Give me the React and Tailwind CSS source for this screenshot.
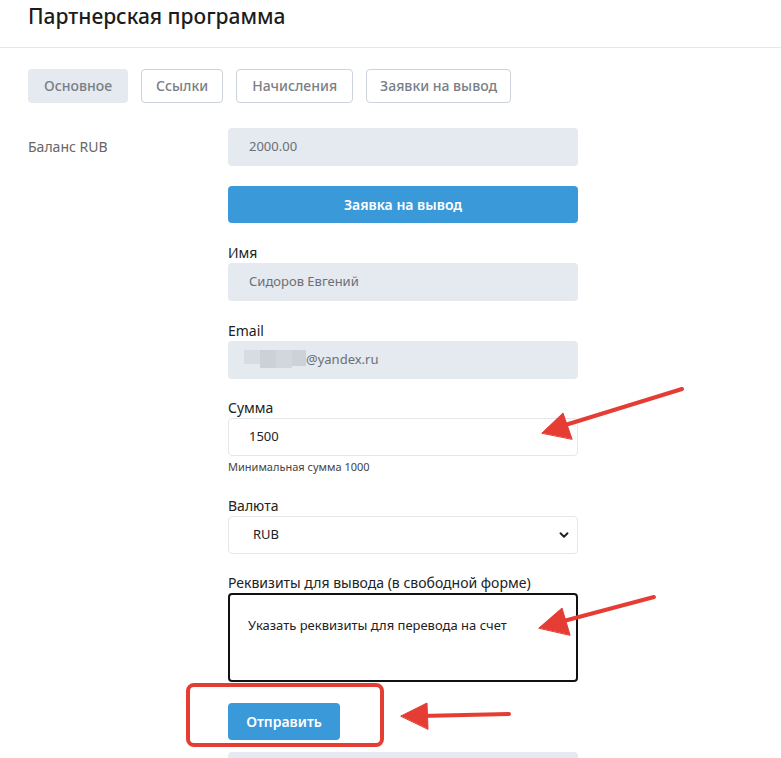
import React from 'react';

const Label = ({ children }) => (
  <div className="h-5 text-sm leading-5 text-[#222]">{children}</div>
);

const ReadOnly = ({ children }) => (
  <div className="flex h-[38px] items-center rounded bg-[#e5e9f0] px-[21px] text-[13px] text-[#6b6f76]">
    {children}
  </div>
);

const Arrows = () => (
  <svg className="pointer-events-none absolute inset-0" width="781" height="758" viewBox="0 0 781 758">
    <g fill="#e53c33" stroke="#e53c33" strokeLinecap="round" strokeLinejoin="round">
      <line x1="682" y1="389" x2="562" y2="426" strokeWidth="4" />
      <polygon points="542,433 563,413 572,439" strokeWidth="1" />
      <line x1="654" y1="597" x2="560" y2="622" strokeWidth="4" />
      <polygon points="539,628 562,608 570,635" strokeWidth="1" />
      <line x1="509" y1="714" x2="420" y2="716" strokeWidth="4" />
      <polygon points="401,716 427,703 428,729" strokeWidth="1" />
    </g>
    <rect x="188" y="685" width="194" height="60" rx="6" fill="none" stroke="#e53c33" strokeWidth="4" />
  </svg>
);

export default function App() {
  return (
    <div className="relative h-[758px] overflow-hidden bg-white font-['Noto_Sans',sans-serif] text-[#222]">
      <div className="h-12 border-b border-[#e3e8f0] px-7">
        <h1 className="text-[21px] font-medium leading-8 text-[#1c1c1c]">Партнерская программа</h1>
      </div>

      <div className="px-7">
        <div className="mt-[21px] flex gap-[13px] text-sm font-medium text-[#7a7f86]">
          <button className="h-[34px] rounded bg-[#e5e9f0] px-4">Основное</button>
          <button className="h-[34px] rounded border border-[#ccd3da] px-[14px]">Ссылки</button>
          <button className="h-[34px] rounded border border-[#ccd3da] px-[15px]">Начисления</button>
          <button className="h-[34px] rounded border border-[#ccd3da] px-[13px]">Заявки на вывод</button>
        </div>

        <div className="mt-[25px] grid grid-cols-[200px_350px]">
          <div className="flex h-[38px] items-center text-sm text-[#666]">Баланс RUB</div>
          <div>
            <ReadOnly>2000.00</ReadOnly>
            <button className="mt-5 h-[37px] w-full rounded bg-[#3a99d8] text-sm font-semibold text-white">
              Заявка на вывод
            </button>

            <div className="mt-5">
              <Label>Имя</Label>
              <ReadOnly>Сидоров Евгений</ReadOnly>
            </div>

            <div className="mt-5">
              <Label>Email</Label>
              <div className="flex h-[38px] items-center rounded bg-[#e5e9f0] pl-4 text-[13px] text-[#6b6f76]">
                <span className="flex h-[20px] w-[62px]">
                  <span className="h-[14px] w-4 bg-[#d8dce2]" />
                  <span className="h-[18px] w-4 bg-[#ccd1d8]" />
                  <span className="h-[18px] w-4 bg-[#d3d7dd]" />
                  <span className="h-[16px] w-[14px] bg-[#cdd1d8]" />
                </span>
                @yandex.ru
              </div>
            </div>

            <div className="mt-[19px]">
              <Label>Сумма</Label>
              <div className="flex h-[38px] items-center rounded border border-[#e3e7ec] px-[20px] text-[13px] text-[#222]">
                1500
              </div>
              <div className="mt-[3px] text-[11px] leading-4 text-[#444]">Минимальная сумма 1000</div>
            </div>

            <div className="mt-[21px]">
              <Label>Валюта</Label>
              <div className="flex h-[38px] items-center justify-between rounded border border-[#e3e7ec] pl-6 pr-[6px] text-[13px] text-[#222]">
                <span>RUB</span>
                <svg width="14" height="14" viewBox="0 0 16 16" fill="none" stroke="#222" strokeWidth="2.2" strokeLinecap="round" strokeLinejoin="round">
                  <path d="M4 6l4 4 4-4" />
                </svg>
              </div>
            </div>

            <div className="mt-[19px]">
              <Label>Реквизиты для вывода (в свободной форме)</Label>
              <div className="h-[89px] rounded border-2 border-[#111] px-[18px] pt-[20px] text-[13px] leading-5 text-[#222]">
                Указать реквизиты для перевода на счет
              </div>
            </div>

            <button className="mt-[21px] h-[37px] w-[112px] rounded bg-[#3a99d8] text-sm font-semibold text-white">
              Отправить
            </button>
          </div>

          <div className="mt-3 h-[38px] pt-[2px] text-sm text-[#666]">Заявок</div>
          <div className="mt-3 h-[38px] rounded bg-[#e5e9f0]" />
        </div>
      </div>

      <Arrows />
    </div>
  );
}
